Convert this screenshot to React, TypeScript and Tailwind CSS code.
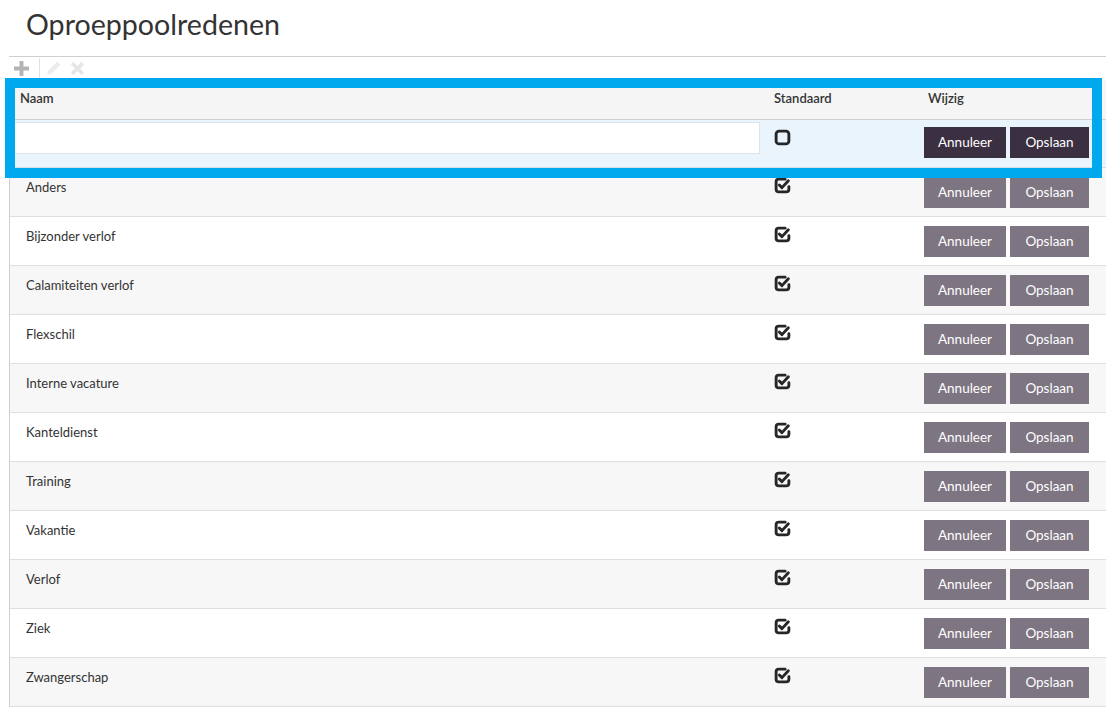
import React from "react";

const rows = [
  "Anders",
  "Bijzonder verlof",
  "Calamiteiten verlof",
  "Flexschil",
  "Interne vacature",
  "Kanteldienst",
  "Training",
  "Vakantie",
  "Verlof",
  "Ziek",
  "Zwangerschap",
];

const CheckSquare = ({ checked }: { checked: boolean }) => (
  <svg width="17" height="17" viewBox="0 0 16 16" fill="none" stroke="#262626" strokeWidth="2.7" strokeLinecap="round" strokeLinejoin="round">
    {checked ? (
      <>
        <path d="M10.5 2 H4.5 A2.5 2.5 0 0 0 2 4.5 V11.5 A2.5 2.5 0 0 0 4.5 14 H11.5 A2.5 2.5 0 0 0 14 11.5 V9" />
        <path d="M5 7.5 L7.5 10 L13.5 3.5" />
      </>
    ) : (
      <rect x="2" y="2" width="12" height="12" rx="2.8" />
    )}
  </svg>
);

const Buttons = ({ active }: { active: boolean }) => {
  const bg = active ? "bg-[#3b2f42]" : "bg-[#7e7582]";
  return (
    <div className="flex gap-[4px]">
      <button className={`${bg} text-white text-[13.5px] h-[31px] w-[82px]`}>Annuleer</button>
      <button className={`${bg} text-white text-[13.5px] h-[31px] w-[79px]`}>Opslaan</button>
    </div>
  );
};

export default function App() {
  return (
    <div className="relative min-h-screen bg-white pl-[9px] font-['Lato','Noto_Sans',sans-serif] text-[#333]">
      <h1 className="h-[56px] pl-[17px] pt-[5px] text-[28.6px] leading-[38px] text-[#333]">Oproeppoolredenen</h1>

      {/* toolbar */}
      <div className="flex h-[24px] items-center border-t border-[#cfcfcf]">
        <div className="flex w-[30px] pl-[5px]">
          <svg width="15" height="15" viewBox="0 0 14 14" stroke="#b3b3b3" strokeWidth="3.6">
            <path d="M7 0 V14 M0 7 H14" />
          </svg>
        </div>
        <div className="h-[22px] w-px bg-[#e2e2e2]" />
        <div className="flex w-[26px] justify-center">
          <svg width="15" height="15" viewBox="0 0 14 14" fill="#ececec">
            <path d="M10.5 0.5 L13.5 3.5 L5 12 L1 13 L2 9 Z" />
          </svg>
        </div>
        <div className="flex w-[22px] justify-center">
          <svg width="13" height="13" viewBox="0 0 12 12" stroke="#e6e6e6" strokeWidth="3.4">
            <path d="M1 1 L11 11 M11 1 L1 11" />
          </svg>
        </div>
      </div>

      {/* table */}
      <div className="border-l border-[#d0d0d0] text-[13px]">
        <div className="flex h-[40px] border-b border-[#cfcfcf] bg-[#f5f5f5] font-semibold">
          <div className="w-[756px] pl-[10px] pt-[9px]">Naam</div>
          <div className="w-[155px] pl-[8px] pt-[9px]">Standaard</div>
          <div className="flex-1 pl-[7px] pt-[9px]">Wijzig</div>
        </div>

        <div className="flex h-[48px] border-b border-[#d8dde2] bg-[#eaf4fd]">
          <div className="w-[756px] pl-[2px] pt-[2px]">
            <div className="h-[32px] w-[748px] border border-[#dde3e8] bg-white" />
          </div>
          <div className="w-[155px] pl-[8px] pt-[9px]">
            <CheckSquare checked={false} />
          </div>
          <div className="flex-1 pl-[3px] pt-[7px]">
            <Buttons active />
          </div>
        </div>

        {rows.map((name, i) => (
          <div key={name} className={`flex h-[49px] border-b border-[#dedede] ${i % 2 === 0 ? "bg-[#f7f7f7]" : "bg-white"}`}>
            <div className="w-[756px] pl-[16px] pt-[10px] leading-[18px]">{name}</div>
            <div className="w-[155px] pl-[8px] pt-[9px]">
              <CheckSquare checked />
            </div>
            <div className="flex-1 pl-[3px] pt-[9px]">
              <Buttons active={false} />
            </div>
          </div>
        ))}
      </div>

      {/* highlight overlay */}
      <div className="pointer-events-none absolute left-[5px] top-[78px] h-[100px] w-[1097px] border-[10px] border-[#00a8ee]" />
    </div>
  );
}
